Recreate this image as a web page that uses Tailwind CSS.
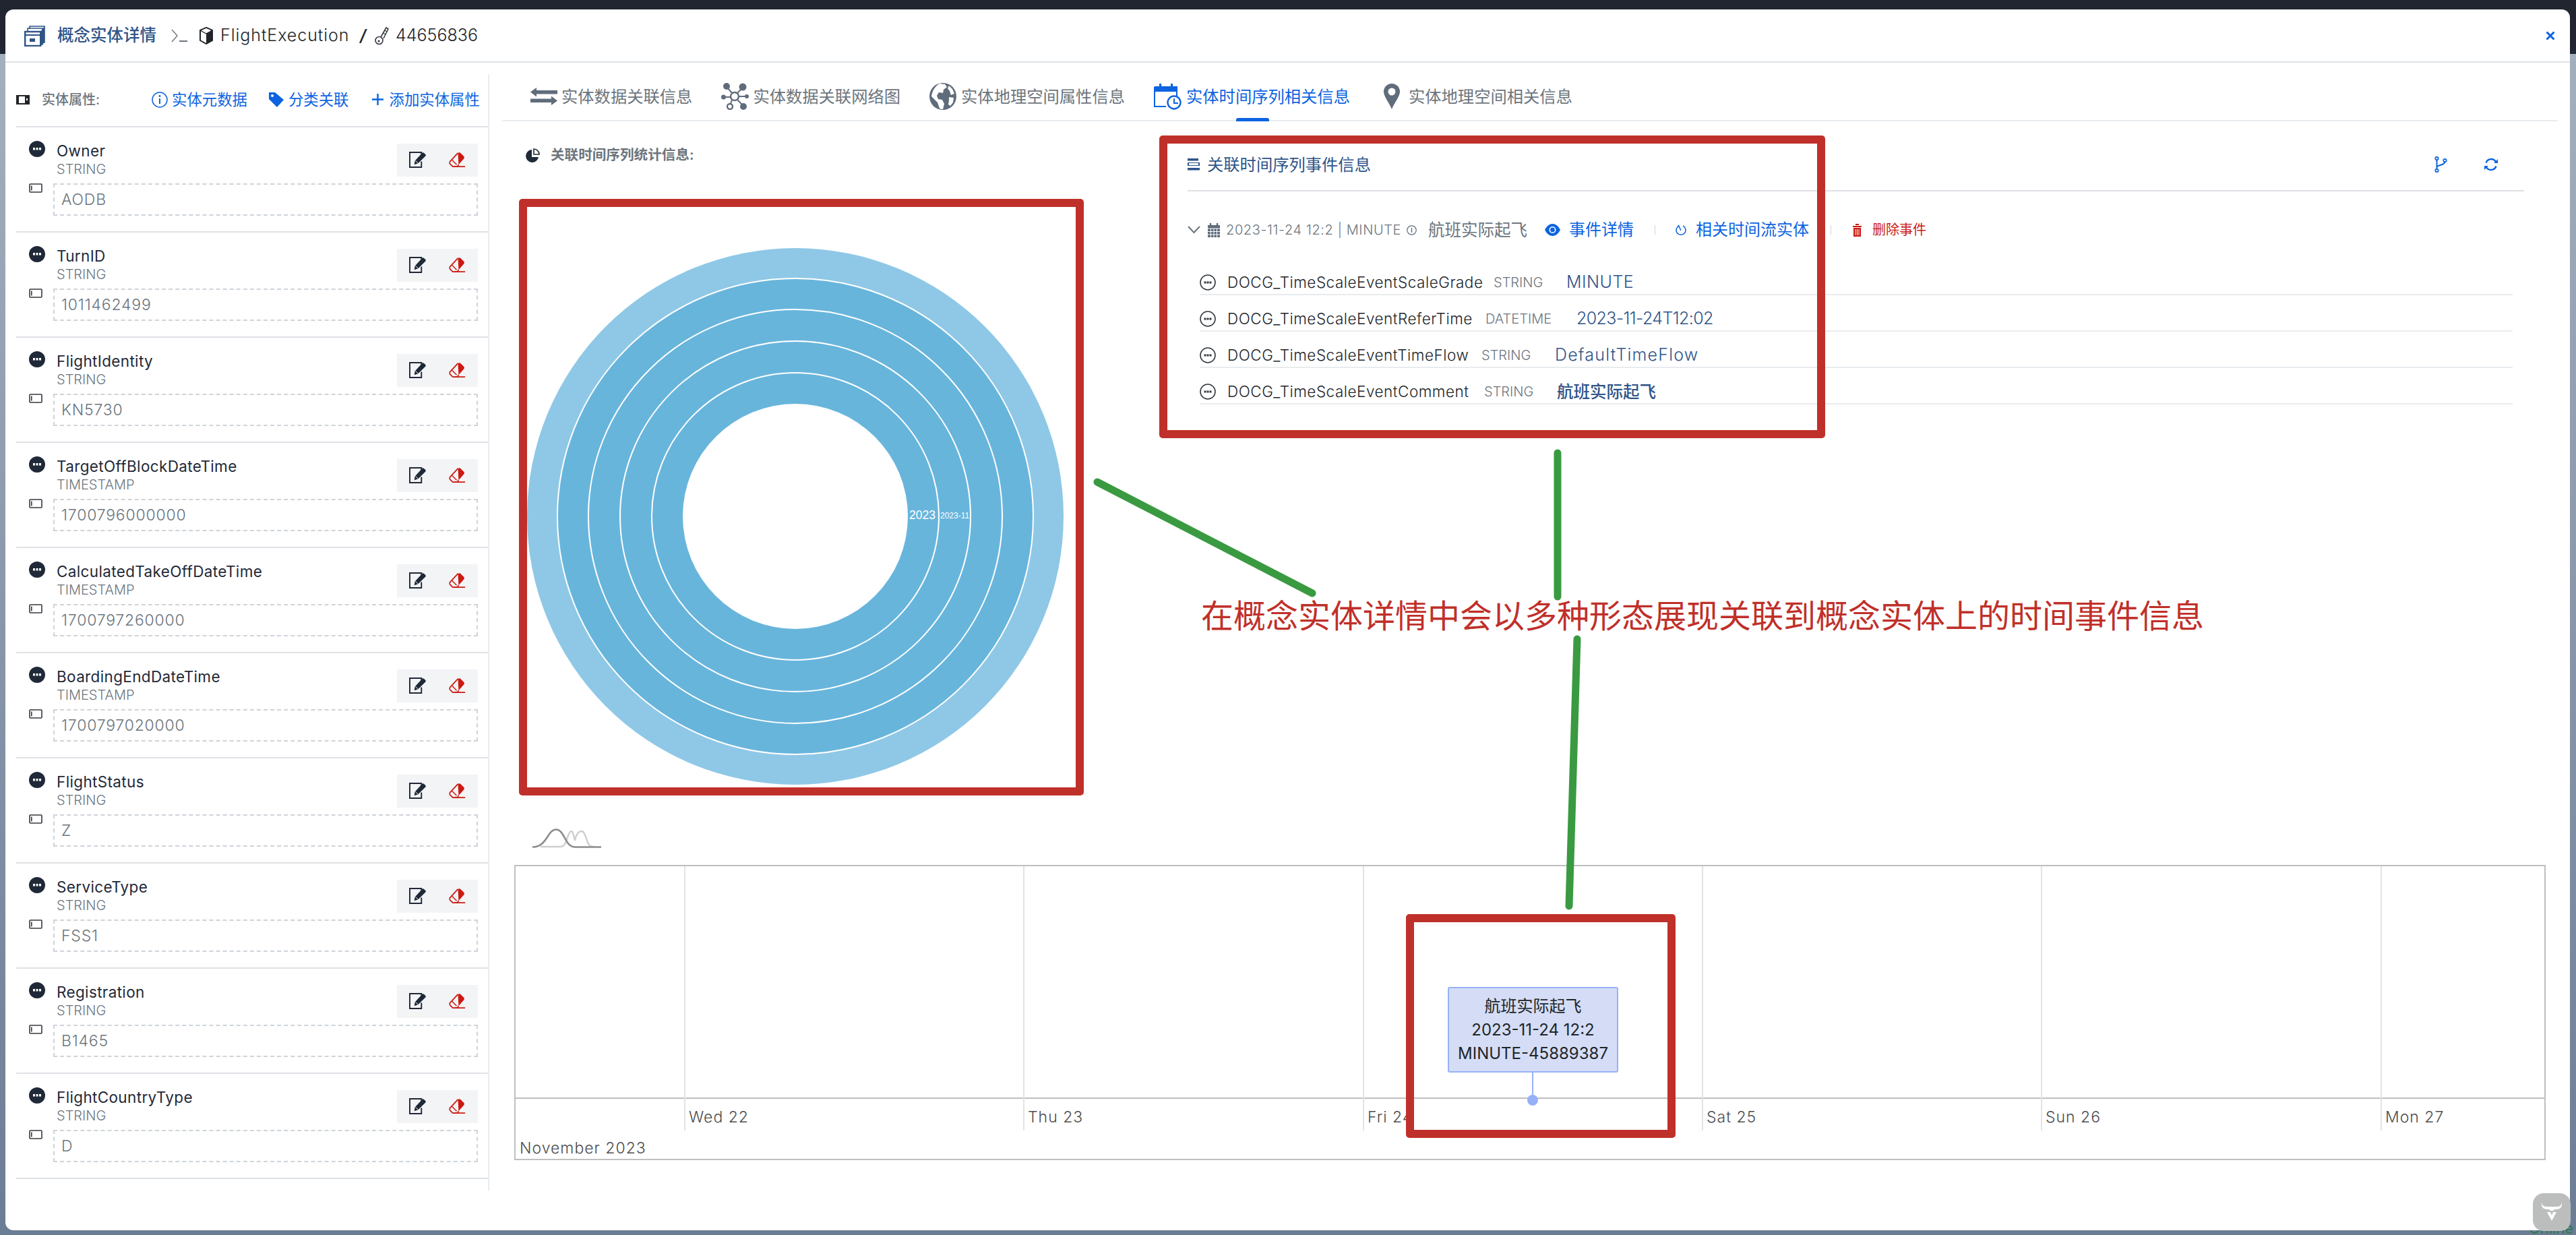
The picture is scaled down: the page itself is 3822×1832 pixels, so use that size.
<!DOCTYPE html>
<html lang="zh">
<head>
<meta charset="UTF-8">
<title>概念实体详情</title>
<script src="https://cdn.jsdelivr.net/npm/@tailwindcss/browser@4"></script>
</head>
<body class="overflow-hidden">
<svg class="absolute w-0 h-0">
  <symbol id="dots" viewBox="0 0 24 24"><circle cx="12" cy="12" r="12" fill="#1f2937"/><rect x="6" y="10" width="3" height="3.5" fill="#fff"/><rect x="10.5" y="10" width="3" height="3.5" fill="#fff"/><rect x="15" y="10" width="3" height="3.5" fill="#fff"/></symbol>
  <symbol id="input" viewBox="0 0 20 14"><rect x="1" y="1" width="18" height="12" rx="1" fill="none" stroke="#343a40" stroke-width="1.6"/><rect x="3" y="3.5" width="1.6" height="7" fill="#343a40"/></symbol>
  <symbol id="edit" viewBox="0 0 26 26"><path d="M19 9V1H1v23h18v-9" fill="none" stroke="#1f2937" stroke-width="2"/><path d="M8 20l1-6L20 2c1-1 2-1 3 0l2 2c1 1 1 2 0 3L14 18z" fill="#1f2937"/><path d="M10 14l4 4" stroke="#fff" stroke-width="1"/></symbol>
  <symbol id="eraser" viewBox="0 0 26 26"><path d="M14 2c1-1 3-1 4 0l5 5c1 1 1 3 0 4l-8 9z" fill="#cc1a12"/><path d="M14 2L2 15c-1 1-1 3 0 4l4 4h7l2-3" fill="none" stroke="#cc1a12" stroke-width="1.8"/><path d="M5 13l7 7M8 23h17" fill="none" stroke="#cc1a12" stroke-width="1.6"/></symbol>
  <symbol id="minus" viewBox="0 0 24 24"><circle cx="12" cy="12" r="11" fill="none" stroke="#343a40" stroke-width="1.6"/><rect x="6.5" y="10.5" width="3" height="3" fill="#343a40"/><rect x="10.5" y="10.5" width="3" height="3" fill="#343a40"/><rect x="14.5" y="10.5" width="3" height="3" fill="#343a40"/></symbol>
</svg>

<div class="relative w-[3822px] h-[1832px] flex flex-col [font-family:Inter,'Noto_Sans_CJK_SC',sans-serif]">
  <div class="h-[80px] bg-[#20252f]"></div>
  <div class="flex-1 bg-linear-to-b from-[#a4afbe] to-[#6b7d95]"></div>
  <div class="absolute left-[3752px] top-[1808px] text-[22px] leading-[28px] text-[#2f7a4f]">Online</div>

  <!-- dialog -->
  <div class="absolute left-[8px] top-[14px] w-[3805px] h-[1811px] bg-white rounded-[12px] flex flex-col">
    <header class="h-[79px] shrink-0 border-b-2 border-[#dee2e6] flex items-center pl-[28px] pr-[22px]">
      <svg class="w-[31px] h-[33px]" viewBox="0 0 31 33"><path d="M8 7V3h22v24h-4" fill="none" stroke="#2f5488" stroke-width="1.6"/><path d="M5 11V6h22v24h-3" fill="none" stroke="#2f5488" stroke-width="1.6"/><rect x="1.2" y="11" width="23" height="21" fill="#fff" stroke="#2f5488" stroke-width="2.4"/><rect x="8" y="21" width="8" height="5" fill="#2f5488"/><path d="M1 16h23" stroke="#2f5488" stroke-width="2"/><path d="M24 11l6-8v24l-6 5z" fill="#2f5488"/></svg>
      <span class="ml-[18px] text-[24.5px] font-medium text-[#2f5488]">概念实体详情</span>
      <svg class="ml-[22px] w-[24px] h-[20px]" viewBox="0 0 24 20"><path d="M1 1l8 9-8 9" fill="none" stroke="#6c757d" stroke-width="1.4"/><path d="M12 18h12" stroke="#6c757d" stroke-width="2"/></svg>
      <svg class="ml-[18px] w-[20px] h-[26px]" viewBox="0 0 20 26"><path d="M10 1l9 4v15l-9 5-9-5V5z" fill="#fff" stroke="#212529" stroke-width="2"/><path d="M1 5l9 5 9-5-9-4z" fill="#fff" stroke="#212529" stroke-width="1.4"/><path d="M10 10l9-5v15l-9 5z" fill="#212529"/></svg>
      <span class="ml-[11px] text-[25px] font-light text-[#212529] tracking-[0.95px] w-[192px] whitespace-nowrap">FlightExecution</span>
      <span class="ml-[15px] text-[24px] italic font-semibold text-[#212529]">/</span>
      <svg class="ml-[13px] w-[21px] h-[30px]" viewBox="0 0 21 30"><circle cx="6.5" cy="22" r="5.5" fill="none" stroke="#343a40" stroke-width="1.6"/><circle cx="6" cy="23" r="1.6" fill="#343a40"/><path d="M9 17L17 3l3 2-7 14" fill="none" stroke="#343a40" stroke-width="1.6"/><path d="M15 7l3 2M13 11l3 2" stroke="#343a40" stroke-width="1.2"/></svg>
      <span class="ml-[10px] text-[25px] font-light text-[#212529]">44656836</span>
      <svg class="ml-auto w-[14px] h-[14px]" viewBox="0 0 14 14"><path d="M1.5 1.5l11 11M12.5 1.5l-11 11" stroke="#0d63e0" stroke-width="3"/></svg>
    </header>

    <div class="flex-1 flex items-start pl-[16px]">
      <!-- properties -->
      <aside class="w-[702px] shrink-0 mt-[17px] h-[1656px] border-r-2 border-[#e9ecef]">
        <div class="h-[79px] border-b-2 border-[#dee2e6] flex items-center pb-[2px] whitespace-nowrap">
          <svg class="w-[20px] h-[14px]" viewBox="0 0 20 14"><rect x="1" y="1" width="18" height="12" fill="none" stroke="#212529" stroke-width="2"/><rect x="1" y="1" width="3" height="12" fill="#212529"/><rect x="13" y="1" width="6" height="12" fill="#212529"/><rect x="15" y="5" width="2" height="3" fill="#fff"/></svg>
          <span class="ml-[18px] text-[20px] font-medium text-[#6c757d] w-[89px]">实体属性:</span>
          <svg class="ml-[74px] w-[24px] h-[24px]" viewBox="0 0 24 24"><circle cx="12" cy="12" r="11" fill="none" stroke="#0d63e0" stroke-width="1.5"/><path d="M12 10v8" stroke="#0d63e0" stroke-width="2"/><circle cx="12" cy="6.5" r="1.4" fill="#0d63e0"/></svg>
          <span class="ml-[6px] text-[#0d63e0] text-[22.4px]">实体元数据</span>
          <svg class="ml-[31px] w-[23px] h-[24px]" viewBox="0 0 23 24"><path d="M1 1h9l13 11-10 11L1 11z" fill="#0d63e0"/><circle cx="6" cy="6" r="2" fill="#fff"/></svg>
          <span class="ml-[7px] text-[#0d63e0] text-[22.4px]">分类关联</span>
          <svg class="ml-[34px] w-[17px] h-[17px]" viewBox="0 0 17 17"><path d="M8.5 0v17M0 8.5h17" stroke="#0d63e0" stroke-width="2.4"/></svg>
          <span class="ml-[9px] text-[#0d63e0] text-[22.4px]">添加实体属性</span>
        </div>

        <div class="h-[156px] border-b-2 border-[#dee2e6] pl-[19px] pr-[15px] pt-[20px] grid grid-cols-[36px_1fr] grid-rows-[53px_48px] gap-y-[10px]">
          <svg class="w-[24px] h-[24px]"><use href="#dots"/></svg>
          <div class="flex justify-between"><div class="pl-[5px]"><div class="text-[22.5px] leading-[30px] tracking-[0.35px] text-[#1f2937]">Owner</div><div class="text-[20px] leading-[24px] font-light text-[#6c757d]">STRING</div></div><div class="mt-[4px] w-[120px] h-[49px] bg-[#f3f4f6] flex items-center justify-between px-[18px]"><svg class="w-[25px] h-[25px]"><use href="#edit"/></svg><svg class="w-[25px] h-[25px]"><use href="#eraser"/></svg></div></div>
          <svg class="w-[20px] h-[14px]"><use href="#input"/></svg>
          <div class="border-2 border-dashed border-[#ced4da] flex items-center pl-[10px] text-[23px] tracking-[0.8px] font-light text-[#6c757d]">AODB</div>
        </div>
        <div class="h-[156px] border-b-2 border-[#dee2e6] pl-[19px] pr-[15px] pt-[20px] grid grid-cols-[36px_1fr] grid-rows-[53px_48px] gap-y-[10px]">
          <svg class="w-[24px] h-[24px]"><use href="#dots"/></svg>
          <div class="flex justify-between"><div class="pl-[5px]"><div class="text-[22.5px] leading-[30px] tracking-[0.35px] text-[#1f2937]">TurnID</div><div class="text-[20px] leading-[24px] font-light text-[#6c757d]">STRING</div></div><div class="mt-[4px] w-[120px] h-[49px] bg-[#f3f4f6] flex items-center justify-between px-[18px]"><svg class="w-[25px] h-[25px]"><use href="#edit"/></svg><svg class="w-[25px] h-[25px]"><use href="#eraser"/></svg></div></div>
          <svg class="w-[20px] h-[14px]"><use href="#input"/></svg>
          <div class="border-2 border-dashed border-[#ced4da] flex items-center pl-[10px] text-[23px] tracking-[0.8px] font-light text-[#6c757d]">1011462499</div>
        </div>
        <div class="h-[156px] border-b-2 border-[#dee2e6] pl-[19px] pr-[15px] pt-[20px] grid grid-cols-[36px_1fr] grid-rows-[53px_48px] gap-y-[10px]">
          <svg class="w-[24px] h-[24px]"><use href="#dots"/></svg>
          <div class="flex justify-between"><div class="pl-[5px]"><div class="text-[22.5px] leading-[30px] tracking-[0.35px] text-[#1f2937]">FlightIdentity</div><div class="text-[20px] leading-[24px] font-light text-[#6c757d]">STRING</div></div><div class="mt-[4px] w-[120px] h-[49px] bg-[#f3f4f6] flex items-center justify-between px-[18px]"><svg class="w-[25px] h-[25px]"><use href="#edit"/></svg><svg class="w-[25px] h-[25px]"><use href="#eraser"/></svg></div></div>
          <svg class="w-[20px] h-[14px]"><use href="#input"/></svg>
          <div class="border-2 border-dashed border-[#ced4da] flex items-center pl-[10px] text-[23px] tracking-[0.8px] font-light text-[#6c757d]">KN5730</div>
        </div>
        <div class="h-[156px] border-b-2 border-[#dee2e6] pl-[19px] pr-[15px] pt-[20px] grid grid-cols-[36px_1fr] grid-rows-[53px_48px] gap-y-[10px]">
          <svg class="w-[24px] h-[24px]"><use href="#dots"/></svg>
          <div class="flex justify-between"><div class="pl-[5px]"><div class="text-[22.5px] leading-[30px] tracking-[0.35px] text-[#1f2937]">TargetOffBlockDateTime</div><div class="text-[20px] leading-[24px] font-light text-[#6c757d]">TIMESTAMP</div></div><div class="mt-[4px] w-[120px] h-[49px] bg-[#f3f4f6] flex items-center justify-between px-[18px]"><svg class="w-[25px] h-[25px]"><use href="#edit"/></svg><svg class="w-[25px] h-[25px]"><use href="#eraser"/></svg></div></div>
          <svg class="w-[20px] h-[14px]"><use href="#input"/></svg>
          <div class="border-2 border-dashed border-[#ced4da] flex items-center pl-[10px] text-[23px] tracking-[0.8px] font-light text-[#6c757d]">1700796000000</div>
        </div>
        <div class="h-[156px] border-b-2 border-[#dee2e6] pl-[19px] pr-[15px] pt-[20px] grid grid-cols-[36px_1fr] grid-rows-[53px_48px] gap-y-[10px]">
          <svg class="w-[24px] h-[24px]"><use href="#dots"/></svg>
          <div class="flex justify-between"><div class="pl-[5px]"><div class="text-[22.5px] leading-[30px] tracking-[0.35px] text-[#1f2937]">CalculatedTakeOffDateTime</div><div class="text-[20px] leading-[24px] font-light text-[#6c757d]">TIMESTAMP</div></div><div class="mt-[4px] w-[120px] h-[49px] bg-[#f3f4f6] flex items-center justify-between px-[18px]"><svg class="w-[25px] h-[25px]"><use href="#edit"/></svg><svg class="w-[25px] h-[25px]"><use href="#eraser"/></svg></div></div>
          <svg class="w-[20px] h-[14px]"><use href="#input"/></svg>
          <div class="border-2 border-dashed border-[#ced4da] flex items-center pl-[10px] text-[23px] tracking-[0.8px] font-light text-[#6c757d]">1700797260000</div>
        </div>
        <div class="h-[156px] border-b-2 border-[#dee2e6] pl-[19px] pr-[15px] pt-[20px] grid grid-cols-[36px_1fr] grid-rows-[53px_48px] gap-y-[10px]">
          <svg class="w-[24px] h-[24px]"><use href="#dots"/></svg>
          <div class="flex justify-between"><div class="pl-[5px]"><div class="text-[22.5px] leading-[30px] tracking-[0.35px] text-[#1f2937]">BoardingEndDateTime</div><div class="text-[20px] leading-[24px] font-light text-[#6c757d]">TIMESTAMP</div></div><div class="mt-[4px] w-[120px] h-[49px] bg-[#f3f4f6] flex items-center justify-between px-[18px]"><svg class="w-[25px] h-[25px]"><use href="#edit"/></svg><svg class="w-[25px] h-[25px]"><use href="#eraser"/></svg></div></div>
          <svg class="w-[20px] h-[14px]"><use href="#input"/></svg>
          <div class="border-2 border-dashed border-[#ced4da] flex items-center pl-[10px] text-[23px] tracking-[0.8px] font-light text-[#6c757d]">1700797020000</div>
        </div>
        <div class="h-[156px] border-b-2 border-[#dee2e6] pl-[19px] pr-[15px] pt-[20px] grid grid-cols-[36px_1fr] grid-rows-[53px_48px] gap-y-[10px]">
          <svg class="w-[24px] h-[24px]"><use href="#dots"/></svg>
          <div class="flex justify-between"><div class="pl-[5px]"><div class="text-[22.5px] leading-[30px] tracking-[0.35px] text-[#1f2937]">FlightStatus</div><div class="text-[20px] leading-[24px] font-light text-[#6c757d]">STRING</div></div><div class="mt-[4px] w-[120px] h-[49px] bg-[#f3f4f6] flex items-center justify-between px-[18px]"><svg class="w-[25px] h-[25px]"><use href="#edit"/></svg><svg class="w-[25px] h-[25px]"><use href="#eraser"/></svg></div></div>
          <svg class="w-[20px] h-[14px]"><use href="#input"/></svg>
          <div class="border-2 border-dashed border-[#ced4da] flex items-center pl-[10px] text-[23px] tracking-[0.8px] font-light text-[#6c757d]">Z</div>
        </div>
        <div class="h-[156px] border-b-2 border-[#dee2e6] pl-[19px] pr-[15px] pt-[20px] grid grid-cols-[36px_1fr] grid-rows-[53px_48px] gap-y-[10px]">
          <svg class="w-[24px] h-[24px]"><use href="#dots"/></svg>
          <div class="flex justify-between"><div class="pl-[5px]"><div class="text-[22.5px] leading-[30px] tracking-[0.35px] text-[#1f2937]">ServiceType</div><div class="text-[20px] leading-[24px] font-light text-[#6c757d]">STRING</div></div><div class="mt-[4px] w-[120px] h-[49px] bg-[#f3f4f6] flex items-center justify-between px-[18px]"><svg class="w-[25px] h-[25px]"><use href="#edit"/></svg><svg class="w-[25px] h-[25px]"><use href="#eraser"/></svg></div></div>
          <svg class="w-[20px] h-[14px]"><use href="#input"/></svg>
          <div class="border-2 border-dashed border-[#ced4da] flex items-center pl-[10px] text-[23px] tracking-[0.8px] font-light text-[#6c757d]">FSS1</div>
        </div>
        <div class="h-[156px] border-b-2 border-[#dee2e6] pl-[19px] pr-[15px] pt-[20px] grid grid-cols-[36px_1fr] grid-rows-[53px_48px] gap-y-[10px]">
          <svg class="w-[24px] h-[24px]"><use href="#dots"/></svg>
          <div class="flex justify-between"><div class="pl-[5px]"><div class="text-[22.5px] leading-[30px] tracking-[0.35px] text-[#1f2937]">Registration</div><div class="text-[20px] leading-[24px] font-light text-[#6c757d]">STRING</div></div><div class="mt-[4px] w-[120px] h-[49px] bg-[#f3f4f6] flex items-center justify-between px-[18px]"><svg class="w-[25px] h-[25px]"><use href="#edit"/></svg><svg class="w-[25px] h-[25px]"><use href="#eraser"/></svg></div></div>
          <svg class="w-[20px] h-[14px]"><use href="#input"/></svg>
          <div class="border-2 border-dashed border-[#ced4da] flex items-center pl-[10px] text-[23px] tracking-[0.8px] font-light text-[#6c757d]">B1465</div>
        </div>
        <div class="h-[156px] border-b-2 border-[#dee2e6] pl-[19px] pr-[15px] pt-[20px] grid grid-cols-[36px_1fr] grid-rows-[53px_48px] gap-y-[10px]">
          <svg class="w-[24px] h-[24px]"><use href="#dots"/></svg>
          <div class="flex justify-between"><div class="pl-[5px]"><div class="text-[22.5px] leading-[30px] tracking-[0.35px] text-[#1f2937]">FlightCountryType</div><div class="text-[20px] leading-[24px] font-light text-[#6c757d]">STRING</div></div><div class="mt-[4px] w-[120px] h-[49px] bg-[#f3f4f6] flex items-center justify-between px-[18px]"><svg class="w-[25px] h-[25px]"><use href="#edit"/></svg><svg class="w-[25px] h-[25px]"><use href="#eraser"/></svg></div></div>
          <svg class="w-[20px] h-[14px]"><use href="#input"/></svg>
          <div class="border-2 border-dashed border-[#ced4da] flex items-center pl-[10px] text-[23px] tracking-[0.8px] font-light text-[#6c757d]">D</div>
        </div>
      </aside>

      <main class="flex-1 min-w-0 pl-[19px] pr-[18px] mt-[17px]">
        <!-- tabs -->
        <nav class="h-[70px] border-b-2 border-[#e9ecef] flex items-center gap-[43px] pl-[42px] pb-[2px] text-[24.3px] text-[#6c757d] whitespace-nowrap">
          <div class="flex items-center gap-[6px]">
            <svg class="w-[40px] h-[28px]" viewBox="0 0 40 28"><path d="M0 7.5L9 1v4h31v5.5H9v4z" fill="#5f6c7b"/><path d="M40 20.5L31 27v-4H0v-5.5h31v-4z" fill="#5f6c7b"/></svg>
            <span>实体数据关联信息</span>
          </div>
          <div class="flex items-center gap-[6px]">
            <svg class="w-[41px] h-[40px]" viewBox="0 0 41 40"><g fill="#5f6c7b"><circle cx="8" cy="5" r="5"/><circle cx="32" cy="6" r="5.5"/><circle cx="3.5" cy="21" r="3.5"/><circle cx="38" cy="20" r="3"/><circle cx="33" cy="35" r="5"/></g><circle cx="13" cy="35" r="4" fill="none" stroke="#5f6c7b" stroke-width="2.4"/><circle cx="20" cy="20" r="6" fill="none" stroke="#5f6c7b" stroke-width="2.4"/><path d="M9 7l8 9M30 9l-7 7M5 21h9M26 20h9M16 25l-2 6M24 25l7 7" stroke="#5f6c7b" stroke-width="2"/></svg>
            <span>实体数据关联网络图</span>
          </div>
          <div class="flex items-center gap-[7px]">
            <svg class="w-[40px] h-[40px]" viewBox="0 0 40 40"><circle cx="20" cy="20" r="20" fill="#5f6c7b"/><path d="M15 1l8 1 3 4-5 4-1 5-6-1-3 5 2 5 6 1 3 6-2 8c-2 0-3 0-5-1l-3-9-5-5-4-4C4 12 8 5 15 1zM29 4l5 5 3 7-5 2-2-6-3-4zM29 21l7 1-1 7-4 5-3-2 1-6z" fill="#fff"/></svg>
            <span>实体地理空间属性信息</span>
          </div>
          <div class="relative h-full flex items-center gap-[7px] text-[#0d63e0]">
            <svg class="w-[41px] h-[40px]" viewBox="0 0 41 40"><path d="M1 6h33v14M1 6v29h17" fill="none" stroke="#0d63e0" stroke-width="2"/><rect x="1" y="6" width="33" height="7" fill="#0d63e0"/><rect x="8" y="1" width="3" height="9" fill="#0d63e0"/><rect x="25" y="1" width="3" height="9" fill="#0d63e0"/><circle cx="30" cy="29" r="9.5" fill="#fff" stroke="#0d63e0" stroke-width="2.4"/><path d="M30 23v7h6" fill="none" stroke="#0d63e0" stroke-width="2"/></svg>
            <span>实体时间序列相关信息</span>
            <div class="absolute left-[122px] bottom-[-4px] w-[49px] h-[5px] bg-[#0d63e0] rounded-t-[3px]"></div>
          </div>
          <div class="flex items-center gap-[13px] ml-[7px]">
            <svg class="w-[24px] h-[38px]" viewBox="0 0 24 38"><path d="M12 0a12 12 0 0 1 12 12c0 7-8 16-12 26C8 28 0 19 0 12A12 12 0 0 1 12 0z" fill="#5f6c7b"/><circle cx="12" cy="12" r="5.5" fill="#fff"/></svg>
            <span>实体地理空间相关信息</span>
          </div>
        </nav>

        <section class="h-[1049px] flex items-start">
          <!-- statistics -->
          <div class="w-[1017px] shrink-0 pl-[35px] pt-[35px]">
            <div class="h-[30px] flex items-center">
              <svg class="w-[21px] h-[21px]" viewBox="0 0 21 21"><path d="M9 2a9.5 9.5 0 1 0 10 11H9z" fill="#1f2937"/><path d="M12 1a8 8 0 0 1 8 8h-8z" fill="none" stroke="#1f2937" stroke-width="1.6"/></svg>
              <span class="ml-[16px] text-[20.6px] font-semibold text-[#6c757d] whitespace-nowrap">关联时间序列统计信息:</span>
            </div>
            <svg class="ml-[1px] mt-[122px] w-[798px] h-[798px]" viewBox="0 0 798 798">
              <circle cx="399" cy="399" r="398" fill="#8fc8e6"/>
              <circle cx="399" cy="399" r="353" fill="#68b5dc" stroke="#fff" stroke-width="2"/>
              <circle cx="399" cy="399" r="307" fill="none" stroke="#fff" stroke-width="2"/>
              <circle cx="399" cy="399" r="260" fill="none" stroke="#fff" stroke-width="2"/>
              <circle cx="399" cy="399" r="213" fill="none" stroke="#fff" stroke-width="2"/>
              <circle cx="399" cy="399" r="167" fill="#fff"/>
              <text x="568" y="403" font-size="17.5" fill="#fff" font-family="Liberation Sans">2023</text>
              <text x="614" y="402" font-size="12" fill="#fff" font-family="Liberation Sans">2023-11</text>
            </svg>
          </div>

          <!-- event info -->
          <div class="flex-1 min-w-0 pr-[50px]">
            <div class="h-[104px] pt-[26px] border-b-2 border-[#dee2e6] flex items-center text-[24.3px] text-[#2f5488]">
              <svg class="w-[18px] h-[20px]" viewBox="0 0 18 20"><rect width="16" height="3.5" y="1" fill="#2f5488"/><rect width="18" height="5" y="7" fill="#2f5488"/><rect width="14" height="3" y="8" fill="#fff" x="2"/><rect width="18" height="3.5" y="15" fill="#2f5488"/></svg>
              <span class="ml-[11px]">关联时间序列事件信息</span>
              <svg class="ml-auto w-[19px] h-[24px]" viewBox="0 0 19 24"><circle cx="3.5" cy="3" r="2.2" fill="none" stroke="#0d63e0" stroke-width="1.8"/><circle cx="3.5" cy="21" r="2.2" fill="none" stroke="#0d63e0" stroke-width="1.8"/><circle cx="15.5" cy="6" r="2.2" fill="none" stroke="#0d63e0" stroke-width="1.8"/><path d="M3.5 5v14M3.5 16c1-4 11-2 12-8" fill="none" stroke="#0d63e0" stroke-width="2"/></svg>
              <svg class="ml-[55px] mr-[39px] w-[20px] h-[20px]" viewBox="0 0 20 20"><path d="M2.5 7.5A8 8 0 0 1 17 6M17.5 12.5A8 8 0 0 1 3 14" fill="none" stroke="#0d63e0" stroke-width="2.4"/><path d="M20 2v6h-6zM0 18v-6h6z" fill="#0d63e0"/></svg>
            </div>
            <div class="h-[100px] pt-[14px] flex items-center text-[#6c757d] whitespace-nowrap">
              <svg class="w-[19px] h-[12px]" viewBox="0 0 19 12"><path d="M1 1l8.5 9L18 1" fill="none" stroke="#6c757d" stroke-width="2"/></svg>
              <svg class="ml-[11px] w-[18px] h-[21px]" viewBox="0 0 18 21"><rect y="3" width="18" height="18" fill="#5f6c7b"/><path d="M4 0v4M14 0v4" stroke="#5f6c7b" stroke-width="2.4"/><path d="M0 8h18M0 12.5h18M0 17h18M4.5 8v13M9 8v13M13.5 8v13" stroke="#fff" stroke-width="1"/></svg>
              <span class="ml-[9px] text-[20px] tracking-[0.6px] font-light w-[257px]">2023-11-24 12:2 | MINUTE</span>
              <svg class="ml-[11px] w-[15px] h-[15px]" viewBox="0 0 15 15"><circle cx="7.5" cy="7.5" r="6.7" fill="none" stroke="#5f6c7b" stroke-width="1.2"/><path d="M7.5 4v7" stroke="#5f6c7b" stroke-width="1.4"/></svg>
              <span class="ml-[17px] text-[24.5px]">航班实际起飞</span>
              <svg class="ml-[26px] w-[23px] h-[18px]" viewBox="0 0 23 18"><path d="M0 9c6-12 17-12 23 0-6 12-17 12-23 0z" fill="#0d63e0"/><circle cx="11.5" cy="9" r="5" fill="#fff"/><circle cx="11.5" cy="9" r="3.4" fill="#0d63e0"/></svg>
              <span class="ml-[13px] text-[24px] text-[#0d63e0]">事件详情</span>
              <div class="ml-[31px] w-px h-[14px] bg-[#ced4da]"></div>
              <svg class="ml-[30px] w-[16px] h-[18px]" viewBox="0 0 16 18"><path d="M5 3a7 7 0 1 0 6 0" fill="none" stroke="#0d63e0" stroke-width="1.5"/><path d="M8 1v9" stroke="#0d63e0" stroke-width="1.5" transform="rotate(-25 8 10)"/></svg>
              <span class="ml-[14px] text-[24px] text-[#0d63e0]">相关时间流实体</span>
              <div class="ml-[32px] w-px h-[14px] bg-[#ced4da]"></div>
              <svg class="ml-[32px] w-[13px] h-[19px]" viewBox="0 0 13 19"><path d="M0 3h13v2H0zM4 0h5v2H4z" fill="#cc1a12"/><path d="M1 6h11v13H1z" fill="#cc1a12"/><path d="M4 8v9M6.5 8v9M9 8v9" stroke="#fff" stroke-width="1"/></svg>
              <span class="ml-[16px] text-[20px] text-[#cc1a12]">删除事件</span>
            </div>
            <div class="ml-[18px] mr-[17px]">
              <div class="h-[54px] pt-[18px] border-b-2 border-[#e9ecef] flex items-center whitespace-nowrap">
                <svg class="w-[24px] h-[24px]"><use href="#minus"/></svg>
                <span class="ml-[17px] w-[376px] text-[22.5px] tracking-[0.5px] font-light text-[#212529]">DOCG_TimeScaleEventScaleGrade</span>
                <span class="ml-[19px] w-[74px] text-[20px] font-light text-[#6c757d]">STRING</span>
                <span class="ml-[34px] text-[25px] tracking-[0.5px] font-light text-[#2f5488]">MINUTE</span>
              </div>
              <div class="h-[54px] pt-[18px] border-b-2 border-[#e9ecef] flex items-center whitespace-nowrap">
                <svg class="w-[24px] h-[24px]"><use href="#minus"/></svg>
                <span class="ml-[17px] w-[364px] text-[22.5px] tracking-[0.5px] font-light text-[#212529]">DOCG_TimeScaleEventReferTime</span>
                <span class="ml-[19px] w-[100px] text-[20px] font-light text-[#6c757d]">DATETIME</span>
                <span class="ml-[35px] text-[25px] tracking-[-0.6px] font-light text-[#2f5488]">2023-11-24T12:02</span>
              </div>
              <div class="h-[54px] pt-[18px] border-b-2 border-[#e9ecef] flex items-center whitespace-nowrap">
                <svg class="w-[24px] h-[24px]"><use href="#minus"/></svg>
                <span class="ml-[17px] w-[359px] text-[22.5px] tracking-[0.5px] font-light text-[#212529]">DOCG_TimeScaleEventTimeFlow</span>
                <span class="ml-[18px] w-[74px] text-[20px] font-light text-[#6c757d]">STRING</span>
                <span class="ml-[35px] text-[25px] tracking-[1.2px] font-light text-[#2f5488]">DefaultTimeFlow</span>
              </div>
              <div class="h-[54px] pt-[18px] border-b-2 border-[#e9ecef] flex items-center whitespace-nowrap">
                <svg class="w-[24px] h-[24px]"><use href="#minus"/></svg>
                <span class="ml-[17px] w-[363px] text-[22.5px] tracking-[0.5px] font-light text-[#212529]">DOCG_TimeScaleEventComment</span>
                <span class="ml-[18px] w-[74px] text-[20px] font-light text-[#6c757d]">STRING</span>
                <span class="ml-[34px] text-[24.5px] font-medium text-[#2f5488]">航班实际起飞</span>
              </div>
            </div>
          </div>
        </section>

        <!-- timeline -->
        <div class="h-[54px] pl-[45px]">
          <svg class="w-[102px] h-[29px]" viewBox="0 0 102 29"><path d="M12 27h30c6 0 8-8 10-14s4-9 6-9 3 6 5 14c1-8 5-14 10-14 4 0 6 8 8 14s4 9 10 9" fill="none" stroke="#cfcfcf" stroke-width="2.4"/><path d="M0 27.5c22 0 22-26 35-26s13 26 28 26h39" fill="none" stroke="#8c8c8c" stroke-width="2.6"/></svg>
        </div>
        <div class="relative ml-[18px] mr-[18px] h-[438px] border-2 border-[#bfbfbf] text-[23px] tracking-[1px] font-light text-[#4d4d4d]">
          <div class="h-[345px] border-b-2 border-[#bfbfbf]"></div>
          <div class="absolute left-[250px] top-0 w-[2px] h-[392px] bg-[#e3e3e3]"></div>
          <div class="absolute left-[753px] top-0 w-[2px] h-[392px] bg-[#e3e3e3]"></div>
          <div class="absolute left-[1257px] top-0 w-[2px] h-[392px] bg-[#e3e3e3]"></div>
          <div class="absolute left-[1760px] top-0 w-[2px] h-[392px] bg-[#e3e3e3]"></div>
          <div class="absolute left-[2263px] top-0 w-[2px] h-[392px] bg-[#e3e3e3]"></div>
          <div class="absolute left-[2767px] top-0 w-[2px] h-[392px] bg-[#e3e3e3]"></div>
          <span class="absolute left-[257px] top-[355px]">Wed 22</span>
          <span class="absolute left-[760px] top-[355px]">Thu 23</span>
          <span class="absolute left-[1264px] top-[355px]">Fri 24</span>
          <span class="absolute left-[1767px] top-[355px]">Sat 25</span>
          <span class="absolute left-[2270px] top-[355px]">Sun 26</span>
          <span class="absolute left-[2774px] top-[355px]">Mon 27</span>
          <span class="absolute left-[6px] top-[401px]">November 2023</span>
          <div class="absolute left-[1383px] top-[179px] w-[253px] h-[127px] bg-[#d5ddf6] border-2 border-[#97b1f8] rounded-[3px] flex flex-col items-center justify-center text-[24px] leading-[35px] tracking-normal font-normal text-[#212529] whitespace-nowrap">
            <div>航班实际起飞</div><div>2023-11-24 12:2</div><div>MINUTE-45889387</div>
          </div>
          <div class="absolute left-[1508px] top-[306px] w-[2px] h-[40px] bg-[#97b1f8]"></div>
          <div class="absolute left-[1501px] top-[339px] w-[16px] h-[16px] rounded-full bg-[#97b1f8]"></div>
        </div>
      </main>
    </div>
  </div>

  <!-- annotations laid over the screenshot -->
  <div class="absolute left-[770px] top-[295px] w-[838px] h-[885px] border-[12px] border-[#c0302a] rounded-[5px]"></div>
  <div class="absolute left-[1720px] top-[201px] w-[988px] h-[449px] border-[12px] border-[#c0302a] rounded-[5px]"></div>
  <div class="absolute left-[2086px] top-[1356px] w-[400px] h-[332px] border-[12px] border-[#c0302a] rounded-[5px]"></div>
  <svg class="absolute left-0 top-0 w-[3822px] h-[1832px] pointer-events-none" viewBox="0 0 3822 1832">
    <g stroke="#3a9a41" stroke-width="11" stroke-linecap="round" fill="none">
      <path d="M1628 715L1947 880"/>
      <path d="M2311 672V885"/>
      <path d="M2340 948L2328 1344"/>
    </g>
  </svg>
  <div class="absolute left-[1782px] top-[878px] text-[48px] leading-[72px] text-[#c0302a] whitespace-nowrap">在概念实体详情中会以多种形态展现关联到概念实体上的时间事件信息</div>

  <div class="absolute left-[3758px] top-[1770px] w-[56px] h-[56px] rounded-[16px] bg-[#bcbebd] flex items-center justify-center">
    <svg class="w-[32px] h-[30px]" viewBox="0 0 32 30"><path d="M1 1c1 5 4 6 9 6h12c5 0 8-1 9-6 1 6-2 10-9 10h-2l-2 2h-4l-2-2h-2C3 11 0 7 1 1z" fill="#fff"/><path d="M9 15l7 13 7-13h-5l-2 5-2-5z" fill="#fff"/></svg>
  </div>
</div>
</body>
</html>
